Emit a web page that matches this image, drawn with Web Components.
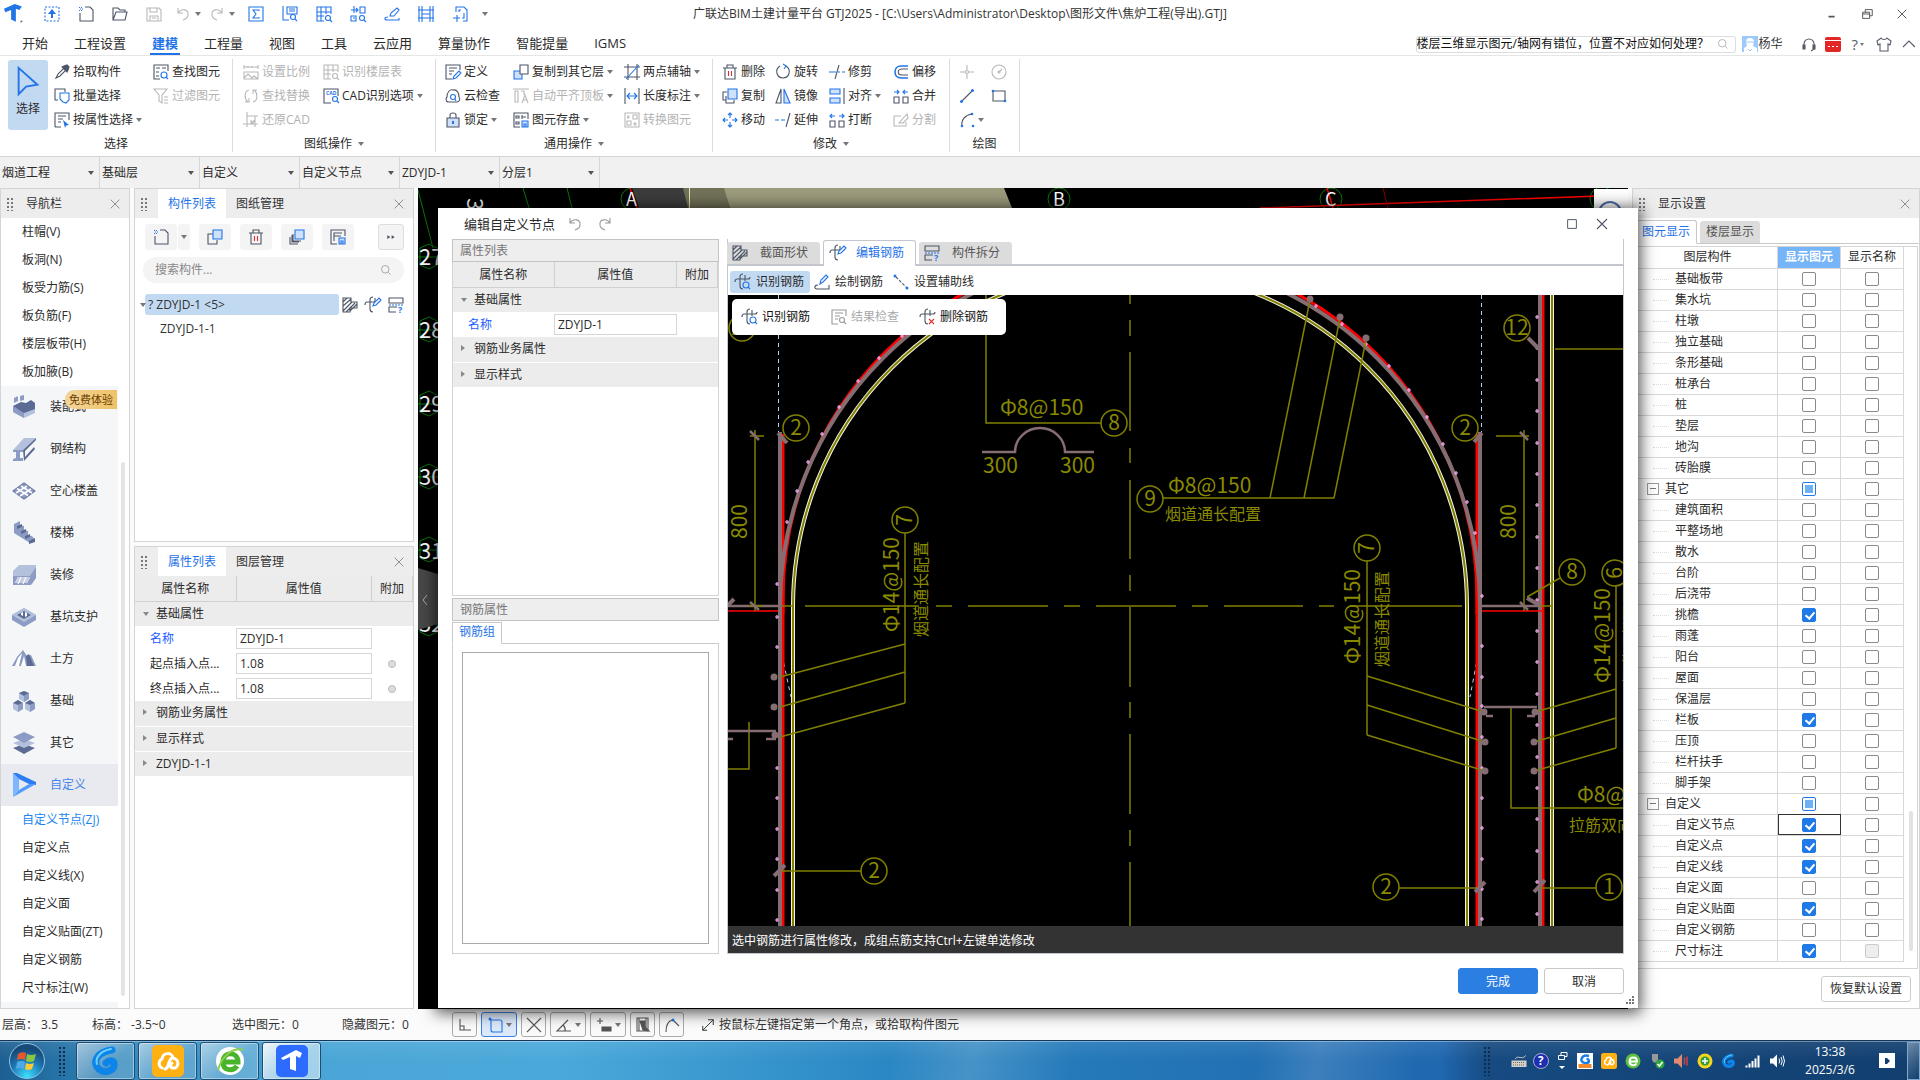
<!DOCTYPE html>
<html lang="zh-CN">
<head>
<meta charset="utf-8">
<title>广联达BIM土建计量平台 GTJ2025</title>
<style>
html,body{margin:0;height:100%}
body{font:12px/16px "Open Sans","Noto Sans CJK SC",sans-serif;color:#2b2b2b;background:#fbfbfb;overflow:hidden}
</style>
</head>
<body>
<gtj-app></gtj-app>
<script>
const RESET = `*{box-sizing:border-box}button,input,select{font:inherit;color:inherit;margin:0;padding:0;border:0;background:none;border-radius:0;outline:0}button{display:flex;align-items:center;white-space:nowrap}:host{display:block}:host([hidden]){display:none}`;

function define(name, css, html, init) {
  const tpl = document.createElement('template');
  customElements.define(name, class extends HTMLElement {
    constructor() { super(); this.attachShadow({ mode: 'open' }); }
    connectedCallback() {
      if (this.shadowRoot.childNodes.length) return;
      tpl.innerHTML = `<style>${RESET}${css}</style>` + (typeof html === 'function' ? html(this) : html);
      this.shadowRoot.append(tpl.content.cloneNode(true));
      if (init) init(this.shadowRoot, this);
    }
  });
}

/* ---------- icons ---------- */
const rebar = '<path d="M0 8Q0 5 2 5H13Q15 5 15 3M8 0Q5 0 5 3V12Q5 15 8 15M10 1V7"/>';
const ICONS = {
  logo: '<g stroke="none" fill="#2273e6"><path d="M0 4 9 0l6 2-2 3-3-1v11l-4-2V5L1 7z"/><path d="M14 14h2l-2 2z" fill="#555"/></g>',
  upload: '<path class="a" stroke-dasharray="2 1.5" d="M1 1h14v14H1z"/><path class="af" d="M8 3l4 5h-3v4H7V8H4z"/>',
  newfile: '<path d="M7 1h5l3 3v11H2V7"/><path class="a" stroke-dasharray="1 1" d="M1 1.5h4M2 3h4M1 4.5h4"/>',
  open: '<path d="M1 14V2h5l2 2h5v2M1 14l3-8h11l-2 8z"/>',
  save: '<path d="M1 2h12l2 2v11H1zM4 2v4h7V2M4 15v-5h8v5M6 12h4"/>',
  undo: '<path d="M3 2v5h5M3 7C6 2 14 3 13 9c0 3-2 4-5 5"/>',
  redo: '<path d="M13 2v5H8M13 7C10 2 2 3 3 9c0 3 2 4 5 5"/>',
  sigma: '<path class="a" d="M1 1h14v14H1zM11 5V4H5l3 4-3 4h6v-1"/>',
  gridfind: '<path class="a" d="M1 0v14h6M5 1h10v7H5zM7 3h6M7 5h6"/><circle class="a" cx="11" cy="11" r="2.5"/><path class="a" d="M13 13l2 2"/>',
  tablefind: '<path class="a" d="M8 15H1V1h14v7M1 6h14M1 10h7M5 1v14M10 1v7"/><circle class="a" cx="12" cy="12" r="2.5"/><path class="a" d="M14 14l2 2"/>',
  move4: '<path class="a" d="M4 0v7M1 4h7M6 2l2 2-2 2M10 1h5v6h-5zM1 10h5v5H1zM3 12h2"/><circle class="a" cx="12" cy="12" r="2.5"/><path class="a" d="M14 14l2 2"/>',
  pen: '<path class="a" d="M6 10l1-3 6-5 2 2-5 6zM4 11c-4 0-4 3-1 3h12v-2"/>',
  frame: '<path class="a" d="M1 0v16M15 0v16M4 0v16M12 0v16M0 4h16M0 12h16M4 8h8"/>',
  crop: '<path class="a" d="M4 6V1h8l3 3v11h-4M1 12h7M5 9v7M7 6V4h2M12 7v5h-2"/>',
  eyedrop: '<path d="M2 14l2-4 6-6 2 2-6 6z"/><path fill="currentColor" d="M8 3l2-1 3-1 2 2-1 3-1 2z"/>',
  batch: '<path d="M4 12H1V1h10v3"/><path class="a" d="M6 5h9v7l-3 3-3-1-3-3z"/>',
  attr: '<path d="M1 15V1h14v7M4 4h8M4 7h5M4 10h3M1 15h6"/><path class="af" d="M9 8l6 5-3 .5-1 2.5z"/>',
  find: '<path d="M15 7V1H1v14h6M3 4h4M3 8h3M3 12h3M9 4h4"/><circle class="a" cx="11" cy="11" r="3"/><path class="a" d="M13 13l2 2"/>',
  filter: '<path d="M1 1h13L9 7v8l-3-2V7zM11 9h4M11 12h4M11 15h4"/>',
  scale: '<path d="M1 3h14M1 1v4M5 2v2M9 2v2M15 1v4M1 8h14v7H1zM1 14l4-4 4 4 2-2 4 3"/>',
  swap: '<path d="M6 2C1 3 1 11 5 14M2 14h4v-4M10 14c5-1 5-9 1-12M14 2h-4v4"/>',
  restore: '<path d="M4 0v15M0 12h15M4 4h11M12 4v11M12 8l-4 3m0-3v3h3"/>',
  cad: '<path d="M8 15H1V1h14v7"/><text x="3" y="7" font-size="5" class="t">CAD</text><circle class="a" cx="12" cy="11" r="2.5"/><path class="a" d="M14 13l2 2"/>',
  define: '<path d="M15 6V1H1v14h6M4 4h8M4 7h5M4 10h3"/><path class="a" d="M8 15l1-3 5-5 2 2-5 5z"/>',
  cloud: '<path d="M3 14a3 3 0 0 1-1-5C2 4 5 1 8 2c4-1 6 3 6 7a3 3 0 0 1-2 5z"/><circle class="a" cx="8" cy="9" r="2.5"/><path class="a" d="M10 11l1 2"/>',
  lock: '<path class="lf" d="M2 6h12v9H2z"/><path d="M5 6V3q0-2 3-2t3 2v3"/><path class="a" stroke-width="2" d="M8 9v3"/>',
  copyto: '<path class="lf a" d="M1 7h8v8H1z"/><path d="M7 1h8v9H7z" fill="#fff"/>',
  align: '<path d="M0 1h16M2 3h3v11H2zM8 3h3v4M9 15l3-8 3 8M10 12h4"/>',
  twopt: '<path d="M4 0v16M13 0v16M0 3h16M0 13h16"/><path class="a" d="M2 15L15 1"/>',
  dim: '<path d="M1 0v16M15 0v16"/><path class="a" d="M3 8h10M6 5L3 8l3 3M10 5l3 3-3 3"/>',
  convert: '<path d="M1 1h14v14H1zM4 3v4M3 5h3M9 3h4v4H9zM3 9h4v4H3zM9 12h4M11 10v4"/>',
  trash: '<path d="M1 4h14M5 4V1h6v3M3 4v11h10V4"/><path stroke="#e03131" d="M6.5 7v5M9.5 7v5"/>',
  rotate: '<path d="M5 2C-1 6 2 14 8 14s9-8 3-12"/><path class="a" d="M8 0l3 2-2 3"/>',
  trim: '<path d="M10 1L6 15"/><path class="a" d="M0 8h7M9 8h2M13 8h3"/>',
  offset: '<path class="a" d="M15 2H8C0 2 0 14 8 14h7" stroke-width="1.6"/><path d="M15 5H9C4 5 4 11 9 11h6"/>',
  copy: '<path d="M4 12H1V4h4"/><path class="lf a" d="M6 1h9v10H6z"/><path d="M4 8v7h8v-3"/>',
  mirror: '<path d="M6 1L1 15h5z"/><path class="lf a" d="M9 1l6 14H9z"/>',
  alignr: '<path class="lf a" d="M1 1h10v5H1zM1 10h10v5H1z"/><path d="M15 0v16"/>',
  merge: '<path d="M1 9h5v6H1zM10 9h5v6h-5z"/><path class="a" d="M1 4h5M4 2l2 2-2 2M15 4h-5M12 2l-2 2 2 2"/>',
  brk: '<path d="M1 9h5v6H1zM10 9h5v6h-5z"/><path class="a" d="M6 4H1M3 2L1 4l2 2M10 4h5M13 2l2 2-2 2"/>',
  move: '<path class="a" d="M8 1v5M8 10v5M1 8h5M10 8h5M6 3l2-2 2 2M6 13l2 2 2-2M3 6L1 8l2 2M13 6l2 2-2 2"/>',
  extend: '<path d="M15 1l-4 14"/><path class="a" d="M0 8h4M6 8h4"/>',
  split: '<path d="M8 4H1v10h12v-4M6 11l8-9 1 4-5 5z"/>',
  point: '<path d="M8 1v5M8 10v5M1 8h5M10 8h5"/><circle cx="8" cy="8" r="1.5"/>',
  circle: '<circle cx="8" cy="8" r="7"/><path d="M8 8l3-3"/><circle cx="8" cy="8" r="1"/>',
  line: '<path d="M3 13L13 3"/><circle class="af" cx="2.5" cy="13.5" r="1.5"/><circle class="af" cx="13.5" cy="2.5" r="1.5"/>',
  rect: '<path d="M2 3h12v10H2z"/><circle class="af" cx="2" cy="3" r="1.3"/><circle class="af" cx="14" cy="13" r="1.3"/>',
  arc: '<path d="M3 14C2 8 6 3 13 2"/><circle class="af" cx="3" cy="14" r="1.3"/><circle class="af" cx="13" cy="2" r="1.3"/><circle class="af" cx="14" cy="14" r="1.3"/>',
  cursor: '<path class="a" stroke-width="1" d="M3 1l10 9-6 1-4 4z"/>',
  search: '<circle cx="7" cy="7" r="5"/><path d="M11 11l3 3"/>',
  close: '<path d="M3 3l10 10M13 3L3 13"/>',
  min: '<path stroke-width="2" d="M4 11h7"/>',
  rest: '<path d="M3 6h8v7H3zM6 6V3h8v7h-3M3 8h8"/>',
  max: '<path d="M3 3h10v10H3z"/>',
  head: '<path d="M3 10V8a5 5 0 0 1 10 0v5l-3 2"/><path fill="currentColor" d="M2 9h2v4H2zM12 9h2v4h-2z"/>',
  shirt: '<path d="M5 2C6 4 10 4 11 2l4 3-1 4-2-1v7H4V8L2 9 1 5z"/>',
  up: '<path d="M2 11l6-6 6 6"/>',
  duplicate: '<path d="M4 5v7h8M1 8v7h8M3 6v7h7"/><path class="lf a" d="M6 1h9v9H6z"/>',
  copy2: '<path d="M6 5H1v10h9v-4"/><path class="lf a" d="M6 1h9v9H6z"/>',
  store: '<path d="M7 15H1V1h14v6M4 12V4h8M4 7h7"/><path class="lf a" d="M9 9h6v6H9zM11 15v-3h2v3"/>',
  elemstore: '<path d="M7 15H1V1h14v6M3 4h3v2H3zM3 10h3v2H3zM9 3v4M9 5h4"/><path class="lf a" d="M9 9h6v6H9zM11 15v-3h2v3"/>',
  ff: '<path fill="currentColor" stroke="none" d="M2 5l5 3-5 3zM9 5l5 3-5 3z"/>',
  section: '<path d="M1 1h8v4h6v6H8v4H1zM1 5l4-4M1 9l8-7M1 14l9-9M4 15l9-9M8 14l7-7"/>',
  editbar: rebar + '<path class="a" fill="#fff" d="M8 9l1-3 5-5 2 2-5 5z"/>',
  split2: '<path d="M1 1h14v5H1zM8 15H1v-5h8"/><path class="a" stroke-dasharray="2 1" d="M1 8h14"/><text class="t" x="10" y="16" font-size="9">?</text>',
  barfind: rebar + '<circle class="a" cx="11" cy="11" r="3"/><path class="a" d="M13 13l2 2"/>',
  bardel: rebar + '<path stroke="#e03131" d="M9 10l5 5M14 10l-5 5"/>',
  penbar: '<path class="a" d="M6 10l1-4 5-5 2 2-5 5z"/><path d="M4 11c-4 0-4 4-1 4h12v-4"/>',
  aux: '<path stroke-dasharray="3 1.5" d="M3 3l10 10"/><circle class="af" cx="2" cy="2" r="1.5"/><circle class="af" cx="14" cy="14" r="1.5"/>',
  check: '<path d="M15 7V1H1v14h6M4 4h8M4 7h5M4 10h3"/><circle cx="11" cy="11" r="2.5"/><path d="M13 13l2 2"/>',
  ortho: '<path d="M3 2v11h11M3 9h4v4"/>',
  snap: '<path class="a" d="M4 3h9q2 0 2 2v10H6q-2 0-2-2z"/><circle class="af" cx="3" cy="2" r="1.5"/>',
  cross: '<path d="M1 1l14 14M15 1L1 15"/>',
  angle: '<path d="M15 14H1L12 3M7 8q3 3 2 6"/>',
  plusbox: '<path d="M4 1v6M1 4h6"/><path fill="currentColor" d="M6 10h9v4H6z"/>',
  film: '<path d="M2 1h11v13H2zM4 1v13M11 1v13"/><path fill="currentColor" d="M5 4h5v6l4 4-6-1z"/>',
  arcpt: '<path d="M2 15Q2 5 8 3M10 4l5 5"/><circle class="af" cx="9" cy="3" r="1.5"/>',
  resize: '<path d="M2 14L14 2M8 2h6v6M2 9v5h5"/>',
  /* navigation */
  n0: '<g stroke="none"><path fill="#8d9cc4" d="M2 3l4-2v5L2 8zM8 1l4-1v5L8 6z"/><path fill="#b4c1dd" d="M1 11v6l11 6 11-5v-5z"/><path fill="#8d9cc4" d="M1 11v6l11 6v-6z"/><path fill="#5b6b93" d="M1 11l8-4 5 1 5-3 4 3v6l-11 4z"/></g>',
  n1: '<g stroke="none"><path fill="#b4c1dd" d="M1 13L12 1h12L11 13z"/><path fill="#5b6b93" d="M11 13L24 1v2L13 14v6l9-10 1 2-11 12z"/><path fill="#8d9cc4" d="M1 13h10v2H8v6h3v3H1v-2l3-1v-6H1z"/></g>',
  n2: '<path fill="#8d9cc4" stroke="#6b7aa4" d="M1 12L12 4l11 8-11 8z"/><path stroke="#fff" stroke-width="1.5" d="M5 9.5l11 7M9 7l11 7M4 14l11-7M8 17l11-7"/>',
  n3: '<g stroke="none"><path fill="#8d9cc4" d="M2 3l6-3v4l4 1v4l4 1v4l4 1 3 4-5 3L2 12z"/><path fill="#5b6b93" d="M5 5l5-2v3l-5 2zM9 10l5-2v3l-5 2zM13 15l5-2v3l-5 2zM17 20l6-3v4l-6 2z"/></g>',
  n4: '<g stroke="none"><path fill="#b4c1dd" d="M7 2h17v12l-4 7H1V8z"/><path fill="#8d9cc4" d="M1 13h17l6-9v11l-5 7H1z"/></g><path stroke="#fff" d="M5 15h13M4 17h13M3 19h13M9 14l-3 7M14 14l-3 7"/>',
  n5: '<g stroke="none"><path fill="#8d9cc4" d="M0 10l12-7 12 7v5l-12 7-12-7z"/><path fill="#b4c1dd" d="M0 10l12-7 12 7-12 7z"/><path fill="#5b6b93" d="M5 10l7-4 7 4-7 4z"/><path fill="#fff" d="M9 8l2-1v4l-2-1zM13 7l2 1v3l-2 1z"/></g>',
  n6: '<g stroke="none"><path fill="#8d9cc4" d="M0 19l5-9 6-7 4 6 4-1 5 11z"/><path fill="#fff" d="M3 19l3-8 4-5-3 13zM9 19l3-10 2 10z"/><path fill="#5b6b93" d="M14 9l3-2 5 12h-7z"/></g>',
  n7: '<g stroke="none"><path fill="#b4c1dd" d="M7 4l5-2 5 2v6l-5 3-5-3zM1 14l5-3 5 3v6l-5 3-5-3zM13 14l5-3 5 3v6l-5 3-5-3z"/><path fill="#5b6b93" d="M7 4l5-2 5 2-5 3zM1 14l5-3 5 3-5 2zM13 14l5-3 5 3-5 2z"/><path fill="#8d9cc4" d="M12 7l5-3v6l-5 3zM6 16l5-2v6l-5 3zM18 16l5-2v6l-5 3z"/></g>',
  n8: '<g stroke="none"><path fill="#5b6b93" d="M1 17l11-4 11 4-11 6z"/><path fill="#b4c1dd" d="M1 12l11-4 11 4-11 5z"/><path fill="#8d9cc4" d="M1 6l11-5 11 5-11 6z"/></g>',
  n9: '<g stroke="none"><path fill="#7db7ff" d="M1 0l6 6v11l-6 7z"/><path fill="#2f7bf2" d="M1 0h4l19 9v3l-7-1L7 6z"/><path fill="#519bff" d="M24 11L1 24l6-7 10-6z"/></g>',
};
define('ui-icon', `
:host{display:inline-block;flex:none;width:var(--s,16px);height:var(--s,16px)}
svg{display:block;width:100%;height:100%;fill:none;stroke:currentColor;stroke-width:1.1;overflow:visible}
.a{stroke:var(--ac,#2374e8)}.af{fill:var(--ac,#2374e8);stroke:none}.lf{fill:var(--lt,#cfe0fa)}
.t{fill:var(--ac,#2374e8);stroke:none;font-weight:700}`,
  el => { const n = el.getAttribute('name'); const b = /^n\d$/.test(n) ? 24 : 16; return `<svg viewBox="0 0 ${b} ${b}" aria-hidden="true">${ICONS[n] || ''}</svg>`; });

define('ui-caret', `:host{display:inline-block;flex:none;border:3px solid transparent;border-top:4px solid #777;border-bottom:0}`, '');

/* ---------- buttons ---------- */
define('tool-button', `
:host{color:#2b2b2b}
button{height:24px;gap:3px}
ui-icon{color:#4d5566}
:host([off]) button{color:#b3b3b3}
:host([off]) ui-icon{color:#b8b8b8;--ac:#b8b8b8;--lt:#fff}`,
  el => `<button type="button" ${el.hasAttribute('off') ? 'disabled' : ''} aria-label="${el.textContent || el.getAttribute('icon')}"><ui-icon name="${el.getAttribute('icon')}"></ui-icon><slot></slot>${el.hasAttribute('menu') ? '<ui-caret></ui-caret>' : ''}</button>`);

define('ribbon-group', `
:host{display:flex;flex-direction:column;border-right:1px solid #dcdcdc;margin:3px 0 4px;padding-top:1px}
.body{display:grid;grid-template-rows:repeat(3,24px);grid-auto-flow:column;grid-template-columns:var(--cols);padding:0 var(--pr,8px) 0 var(--pl,9px)}
.cap{display:flex;justify-content:center;align-items:center;gap:6px;height:22px;padding-top:3px}`,
  el => `<div class="body"><slot></slot></div><div class="cap">${el.getAttribute('caption')}${el.hasAttribute('menu') ? '<ui-caret></ui-caret>' : ''}</div>`);

/* ---------- title bar ---------- */
define('title-bar', `
header{display:grid;grid-template-columns:1fr auto 1fr;height:27px;align-items:center;background:#fff;color:#333}
.qa{display:flex;align-items:center;color:#4d5566}
.qa button{width:34px;height:26px;justify-content:center;gap:4px}
.logo{margin:0 12px 0 4px;--s:19px}
.off{color:#b8b8b8}.last{width:16px!important}
.win{display:flex;justify-content:flex-end;padding-right:1px;color:#555}
.win button{width:35px;height:22px;justify-content:center;--s:14px}`, () => {
  const b = (n, c = '', m = '') => `<button class="${c}" aria-label="${n}"><ui-icon name="${n}"></ui-icon>${m ? '<ui-caret></ui-caret>' : ''}</button>`;
  return `<header><div class="qa"><ui-icon class="logo" name="logo"></ui-icon>${b('upload')}${b('newfile')}${b('open')}${b('save', 'off')}${b('undo', 'off', 1)}${b('redo', 'off', 1)}${['sigma', 'gridfind', 'tablefind', 'move4', 'pen', 'frame', 'crop'].map(n => b(n)).join('')}<button class="last" aria-label="更多"><ui-caret></ui-caret></button></div>
<div>广联达BIM土建计量平台 GTJ2025 - [C:\\Users\\Administrator\\Desktop\\图形文件\\焦炉工程(导出).GTJ]</div>
<div class="win">${b('min')}${b('rest')}${b('close')}</div></header>`;
});

define('menu-bar', `
nav{display:flex;height:29px;background:#fff;border-bottom:1px solid #e6e6e6;padding:0 3px 0 9px;font-size:13px}
nav>button{padding:4px 13px 0;height:28px;position:relative}
.on{color:#1f73e8;font-weight:700}
.on::after{content:"";position:absolute;left:11px;right:11px;bottom:0;height:2px;background:#1f73e8}
.r{margin-left:auto;display:flex;align-items:center;font-size:12px;color:#555b68;padding-top:6px}
.s{display:flex;align-items:center;width:320px;height:17px;border:1px solid #ddd;border-radius:3px;overflow:hidden;margin-right:6px}
.s input{width:300px;flex:none;height:15px;color:#111;font-size:12px}
.s ui-icon{--s:12px;color:#aaa}
.av{width:16px;height:16px;display:block}
.n{margin:0 18px 0 1px;color:#333}
.q{font-size:15px;gap:2px;margin:0 12px 0 11px}
.q ui-caret{border-width:3px 2px 0}
.g{background:#e32626;width:16px;height:15px;border-radius:2px;justify-content:center;margin-left:8px}
.g svg{display:block}
.sh{margin-right:9px}`, () => `<nav>${'开始,工程设置,建模,工程量,视图,工具,云应用,算量协作,智能提量,IGMS'.split(',').map(t => `<button class="${t == '建模' ? 'on' : ''}">${t}</button>`).join('')}
<div class="r"><label class="s"><input aria-label="搜索" value="楼层三维显示图元/轴网有错位，位置不对应如何处理？"><ui-icon name="search"></ui-icon></label>
<svg class="av" viewBox="0 0 16 16" aria-hidden="true"><path fill="#9ccafa" d="M0 0h16v16H0z"/><path fill="#fff" d="M4 6a4 4 0 0 1 8 0l-1 4 4 2v4H2v-4l3-2z"/><path stroke="#9ccafa" d="M3 6h10M6 13l2 2 2-2" fill="none"/></svg><span class="n">杨华</span>
<button aria-label="客服"><ui-icon name="head"></ui-icon></button>
<button class="g" aria-label="消息"><svg width="16" height="15" aria-hidden="true"><path stroke="#fff" d="M0 3.5h16M3 9.5h2M7 9.5h2M11 9.5h2"/></svg></button>
<button class="q" aria-label="帮助">?<ui-caret></ui-caret></button>
<button class="sh" aria-label="皮肤"><ui-icon name="shirt"></ui-icon></button><button aria-label="收起"><ui-icon name="up"></ui-icon></button></div></nav>`);

define('app-ribbon', `
:host{display:flex;height:100px;background:#fff}
.big{grid-row:1/4;width:40px;height:70px;flex-direction:column;justify-content:flex-end;background:#c2d9f2;border-radius:3px;gap:5px;padding-bottom:13px;--s:30px}`, `
<ribbon-group caption="选择" style="--cols:46px 99px 71px;--pl:8px;--pr:8px">
<button class="big"><ui-icon name="cursor"></ui-icon>选择</button>
<tool-button icon="eyedrop">拾取构件</tool-button><tool-button icon="batch">批量选择</tool-button><tool-button icon="attr" menu>按属性选择</tool-button>
<tool-button icon="find">查找图元</tool-button><tool-button icon="filter" off>过滤图元</tool-button></ribbon-group>
<ribbon-group caption="图纸操作" menu style="--cols:80px 105px;--pl:10px;--pr:7px">
<tool-button icon="scale" off>设置比例</tool-button><tool-button icon="swap" off>查找替换</tool-button><tool-button icon="restore" off>还原CAD</tool-button>
<tool-button icon="tablefind" off>识别楼层表</tool-button><tool-button icon="cad" menu>CAD识别选项</tool-button></ribbon-group>
<ribbon-group caption="通用操作" menu style="--cols:68px 111px 80px">
<tool-button icon="define">定义</tool-button><tool-button icon="cloud">云检查</tool-button><tool-button icon="lock" menu>锁定</tool-button>
<tool-button icon="copyto" menu>复制到其它层</tool-button><tool-button icon="align" off menu>自动平齐顶板</tool-button><tool-button icon="elemstore" menu>图元存盘</tool-button>
<tool-button icon="twopt" menu>两点辅轴</tool-button><tool-button icon="dim" menu>长度标注</tool-button><tool-button icon="convert" off>转换图元</tool-button></ribbon-group>
<ribbon-group caption="修改" menu style="--cols:53px 54px 64px 48px">
<tool-button icon="trash">删除</tool-button><tool-button icon="copy">复制</tool-button><tool-button icon="move">移动</tool-button>
<tool-button icon="rotate">旋转</tool-button><tool-button icon="mirror">镜像</tool-button><tool-button icon="extend">延伸</tool-button>
<tool-button icon="trim">修剪</tool-button><tool-button icon="alignr" menu>对齐</tool-button><tool-button icon="brk">打断</tool-button>
<tool-button icon="offset">偏移</tool-button><tool-button icon="merge">合并</tool-button><tool-button icon="split" off>分割</tool-button></ribbon-group>
<ribbon-group caption="绘图" style="--cols:32px 20px">
<tool-button icon="point" off></tool-button><tool-button icon="line"></tool-button><tool-button icon="arc" menu></tool-button>
<tool-button icon="circle" off></tool-button><tool-button icon="rect"></tool-button></ribbon-group>`);

define('combo-box', `
:host{width:100px;border-right:1px solid #d6d6d6}
div{display:flex;align-items:center;height:31px;padding-right:5px}
select{appearance:none;flex:1;min-width:0;height:30px;padding-left:2px}
ui-caret{border-width:4px 3px 0;border-top-color:#555}`,
  el => `<div><select aria-label="${el.getAttribute('label')}"><option>${el.textContent}</option></select><ui-caret></ui-caret></div>`);

/* ---------- dock panel ---------- */
define('dock-panel', `
:host{display:flex;flex-direction:column;background:#fff;border:1px solid #d4d4d4;min-height:0}
header{display:flex;height:29px;flex:none;background:#ededee;align-items:stretch;color:#333}
.h{flex:none;width:8px;margin:8px 10px 7px 5px;background:radial-gradient(circle,#777 1px,transparent 1px) 0 0/4px 4px}
header button{padding:0 10px}
.on{background:#fff;color:#1f73e8}
.ti{padding:7px 0 0 2px}
header .x{margin-left:auto;padding:0 7px;color:#8a8a8a;--s:14px}`,
  el => `<header><i class="h"></i>${el.hasAttribute('caption') ? `<span class="ti">${el.getAttribute('caption')}</span>` : (el.getAttribute('tabs') || '').split(',').map((t, i) => `<button class="${i ? '' : 'on'}">${t}</button>`).join('')}<button class="x" aria-label="关闭"><ui-icon name="close"></ui-icon></button></header><slot></slot>`);

/* ---------- navigation ---------- */
define('nav-list', `
:host{display:flex;flex:1;min-height:0;overflow:hidden}
.l{width:117px;background:#f5f6f8;height:100%}
.sub{background:#fff;display:block}
.sub button{height:28px;padding-left:21px;width:100%}
.cat button{height:42px;width:100%;padding-left:11px;gap:14px;--s:24px;position:relative}
.cat .on{background:#e8eaef;color:#4a86e8}
.cur{color:#1a86f0}
.bd{position:absolute;left:64px;right:1px;top:4px;height:19px;background:linear-gradient(90deg,#f3d49a,#efc267);border-radius:9px 0 0 9px;color:#6b3d00;line-height:19px;font-size:11px;text-align:center}
.sb{width:4px;border-radius:2px;background:#e4e4e6;margin:244px 0 12px 3px}`, () => {
  const s = (a, c) => `<div class="sub">${a.split(',').map((t, i) => `<button class="${c && !i ? 'cur' : ''}">${t}</button>`).join('')}</div>`;
  const cats = '装配式,钢结构,空心楼盖,楼梯,装修,基坑支护,土方,基础,其它,自定义'.split(',');
  return `<div class="l">${s('柱帽(V),板洞(N),板受力筋(S),板负筋(F),楼层板带(H),板加腋(B)')}<div class="cat">${cats.map((t, i) => `<button class="${i == 9 ? 'on' : ''}"><ui-icon name="n${i}"></ui-icon><span>${t}</span>${i ? '' : '<span class="bd">免费体验</span>'}</button>`).join('')}</div>${s('自定义节点(ZJ),自定义点,自定义线(X),自定义面,自定义贴面(ZT),自定义钢筋,尺寸标注(W)', 1)}</div><i class="sb"></i>`;
});

/* ---------- component list ---------- */
define('component-list', `
:host{padding:6px 9px 6px 8px;color:#333}
.tb{display:flex;gap:9px;padding:0 0 0 2px}
.tb button{width:32px;height:26px;background:#f4f4f5;border-radius:3px;justify-content:center;color:#4d5566}
.tb .sp{display:flex;gap:1px}.tb .d{width:12px}
.tb .ff{margin-left:auto;width:26px;border:1px solid #ddd;--s:10px}
.s{display:flex;align-items:center;height:26px;margin-top:7px;border-radius:13px;background:#f4f4f4;padding:0 12px;color:#999}
.s input{flex:1;min-width:0}.s input::placeholder{color:#888;opacity:1}
.row{display:flex;align-items:center;margin:11px 0 0 -3px;gap:7px}
.row ui-caret{margin-right:-8px;position:relative}
.row .n{flex:1;height:21px;background:#c2d9f2;border-radius:3px;padding:0 3px;margin-right:-4px}
.row ui-icon{color:#4d5566}
.k{padding-left:17px;margin-top:6px}`, `
<div class="tb"><div class="sp"><button aria-label="新建"><ui-icon name="newfile"></ui-icon></button><button class="d" aria-label="新建菜单"><ui-caret></ui-caret></button></div>
<button aria-label="复制"><ui-icon name="copy2"></ui-icon></button><button aria-label="删除"><ui-icon name="trash"></ui-icon></button><button aria-label="层间复制"><ui-icon name="duplicate"></ui-icon></button><button aria-label="存档"><ui-icon name="store"></ui-icon></button><button class="ff" aria-label="更多"><ui-icon name="ff"></ui-icon></button></div>
<label class="s"><input aria-label="搜索构件" placeholder="搜索构件..."><ui-icon name="search" style="--s:12px"></ui-icon></label>
<div class="row"><ui-caret></ui-caret><button class="n">? ZDYJD-1 &lt;5&gt;</button><ui-icon name="section"></ui-icon><ui-icon name="editbar"></ui-icon><ui-icon name="split2"></ui-icon></div>
<div class="k"><button>ZDYJD-1-1</button></div>`);

/* ---------- property grid ---------- */
define('property-grid', `
table{border-collapse:collapse;table-layout:fixed;width:100%}
th,td{padding:0;height:25px;font-weight:400;text-align:left}
thead th{background:#ececec;text-align:center;border-right:1px solid #cfcfcf;border-bottom:1px solid #d0d0d0;padding-top:2px}
.g th{background:#ececec;border-bottom:1px solid #fff;padding-left:8px}
.g i{display:inline-block;border:3px solid transparent;border-left:4px solid #888;border-right:0;margin-right:9px;vertical-align:2px}
.g .o{border:3px solid transparent;border-top:4px solid #888;border-bottom:0;margin-right:7px}
td label{padding-left:15px;display:block;white-space:nowrap}
.k label{color:#1a5cff}
input{width:100%;height:21px;border:1px solid #d6d6d6;padding:0 3px;display:block;background:#fff}
b{display:block;width:8px;height:8px;border-radius:50%;background:#ddd;border:1px solid #bbb;margin:auto}`,
  el => {
    const rows = JSON.parse(el.getAttribute('rows'));
    return `<table><colgroup><col style="width:101px"><col><col style="width:41px"></colgroup><thead><tr><th scope="col">属性名称</th><th scope="col">属性值</th><th scope="col">附加</th></tr></thead><tbody>${rows.map((r, i) => typeof r === 'string'
      ? `<tr class="g"><th colspan="3" scope="rowgroup"><i class="${r == '基础属性' ? 'o' : ''}"></i>${r}</th></tr>`
      : `<tr class="${r[0] == '名称' ? 'k' : ''}"><td><label for="p${i}">${r[0]}</label></td><td><input id="p${i}" value="${r[1]}"></td><td>${r[0] == '名称' ? '' : '<b></b>'}</td></tr>`).join('')}</tbody></table>`;
  });

/* ---------- layer table ---------- */
define('layer-table', `
:host{display:flex;flex-direction:column;flex:1;min-height:0}
.tabs{display:flex;align-items:flex-end;gap:3px;height:26px;border-bottom:1px solid #c8c8c8;padding-left:2px}
.tabs button{height:22px;padding:0 6px;background:#dcdcdc;border-radius:3px 3px 0 0;color:#555}
.tabs .on{height:24px;background:#fff;border:1px solid #c8c8c8;border-bottom-color:#fff;color:#1f73e8;margin-bottom:-1px}
.w{flex:1;display:flex;margin:2px 1px 0 4px;border:1px solid #d4d4d4}
table{flex:1;border-collapse:collapse;table-layout:fixed;align-self:flex-start}
th,td{height:21px;padding:0;border:1px solid #d8d8d8;border-left:0;border-top:0;font-weight:400;text-align:left}
thead th{height:21px;text-align:center}
thead .b{background:#76b5f7;color:#fff;font-weight:700}
td{text-align:center}
tbody th{padding-left:37px;position:relative}
tbody th::before{content:"";position:absolute;left:15px;width:16px;top:10px;border-top:1px dotted #ddd}
tbody .p{padding-left:27px}
.p i{position:absolute;left:9px;top:4px;width:12px;height:12px;border:1px solid #999;background:linear-gradient(#777,#777) center/6px 1px no-repeat #fff}
input{appearance:none;width:14px;height:14px;border:1px solid #8a8a8a;border-radius:2px;background:#fff;display:block;margin:auto}
input:checked{border-color:#1f7ae8;background:#1f7ae8}
input:checked::after{content:"";display:block;width:4px;height:7px;border:solid #fff;border-width:0 2px 2px 0;transform:rotate(40deg);margin:1px 0 0 4px}
input:indeterminate{border-color:#1f7ae8;background:linear-gradient(#6fb0f5,#6fb0f5) center/8px 8px no-repeat #fff}
input:disabled{background:#eee;border-color:#ccc}
.f{outline:1px solid #333;outline-offset:-1px}
.sb{width:13px}.sb i{display:block;width:4px;margin:564px auto 0;height:140px;border-radius:2px;background:#e2e2e2}
.bt{display:flex;justify-content:flex-end;padding:7px 8px 6px}
.bt button{height:26px;border:1px solid #ccc;border-radius:3px;padding:0 8px;background:#fff}`, () => {
  const names = '基础板带,集水坑,柱墩,独立基础,条形基础,桩承台,桩,垫层,地沟,砖胎膜,-其它,建筑面积,平整场地,散水,台阶,后浇带,+挑檐,雨蓬,阳台,屋面,保温层,+栏板,压顶,栏杆扶手,脚手架,-自定义,+自定义节点,+自定义点,+自定义线,自定义面,+自定义贴面,自定义钢筋,+尺寸标注'.split(',');
  return `<div class="tabs"><button class="on">图元显示</button><button>楼层显示</button></div><div class="w"><table><colgroup><col><col style="width:63px"><col style="width:63px"></colgroup><thead><tr><th scope="col">图层构件</th><th scope="col" class="b">显示图元</th><th scope="col">显示名称</th></tr></thead><tbody>${names.map(n => {
    const par = n[0] == '-', on = n[0] == '+', t = n.replace(/^[-+]/, '');
    return `<tr><th scope="row" class="${par ? 'p' : ''}">${par ? '<i></i>' : ''}${t}</th><td class="${t == '自定义节点' ? 'f' : ''}"><input type="checkbox" aria-label="${t} 显示图元" ${on ? 'checked' : ''} ${par ? 'data-mix' : ''}></td><td><input type="checkbox" aria-label="${t} 显示名称" ${t == '尺寸标注' ? 'disabled' : ''}></td></tr>`;
  }).join('')}</tbody></table><div class="sb"><i></i></div></div><div class="bt"><button>恢复默认设置</button></div>`;
}, root => root.querySelectorAll('[data-mix]').forEach(c => c.indeterminate = true));

/* ---------- background viewport ---------- */
define('model-view', `
:host{flex:1;min-width:0;background:#000;overflow:hidden}
svg{display:block;font:22px "Noto Sans CJK SC",sans-serif}`, () => `<svg width="100%" height="100%" viewBox="418 188 1210 821" preserveAspectRatio="xMinYMin slice">
<g fill="none" stroke="#0a7a0a"><path d="M418 190l15 58M523 188l6 20M567 188l5 20"/>${[257, 330, 404, 477, 550, 624].map(y => `<path d="M418 ${y}h26M420 ${y - 9}l9-4 10 5M420 ${y + 8}l9 4 10-5M420 ${y - 9}v17"/>`).join('')}
<circle cx="632" cy="199" r="11"/><circle cx="1059" cy="199" r="11"/><circle cx="1331" cy="199" r="11"/><circle cx="1602" cy="199" r="12"/></g>
<path fill="#3c3c3c" d="M632 188h52l5 20h-50z"/><path fill="#727259" d="M683 188h42l5 20h-42z"/><path fill="#9c9b7c" d="M724 188h280l8 20H730z"/><path stroke="#e8e6b8" d="M689.5 188v20"/>
<path stroke="#f00" stroke-width="1.5" d="M630 188l7 20M1327 188l6 20M1260 208l340-12"/><path stroke="#800" d="M1383 188l5 20"/>
<g fill="#fff">${[27, 28, 29, 30, 31, 32].map((n, i) => `<text x="419" y="${265 + Math.round(i * 73.4)}">${n}</text>`).join('')}<text x="626" y="206" font-size="18">A</text><text x="1053" y="206" font-size="18">B</text><text x="1325" y="206" font-size="18">C</text><text transform="translate(467 198) rotate(90)">3</text></g>
<path fill="#484848" d="M418 568l20 6v50l-20 6z"/><path d="M427 595l-4 5 4 5" fill="none" stroke="#aaa"/>
<path fill="#fff" d="M1594 189h34v60h-34z"/><circle cx="1610" cy="213" r="11" fill="none" stroke="#4d6ea8" stroke-width="2"/></svg>`);

/* ---------- rebar drawing ---------- */
define('cad-view', `
:host{flex:1;min-height:0;background:#000;overflow:hidden}
svg{display:block;fill:none;font-family:"Noto Sans CJK SC",sans-serif}
.o{stroke:#808000;stroke-width:1.5}.m{stroke:#856d72;stroke-width:4}.m2{stroke:#856d72;stroke-width:2.5}.r{stroke:#f00;stroke-width:3}
text{fill:#8a8a00;font-size:21px}.n{text-anchor:middle}.c{font-size:16px}
.dot{fill:#856d72}.pk{stroke:#ffb0ff;stroke-width:1.2}`, () => {
  const plus = (x, y) => `M${x - 2} ${y}h4M${x} ${y - 2}v4`;
  const bubble = (x, y, t, rot) => `<circle class="o" cx="${x}" cy="${y}" r="13"/><text class="n" transform="translate(${x} ${y}) rotate(${rot ? -90 : 0})" y="7">${t}</text>`;
  const rows = (x, ys) => ys.map(y => plus(x, y)).join('');
  const arcL = [[902, 336], [879, 358], [858, 381], [839, 407], [822, 434], [808, 462], [797, 491], [787, 522]];
  const arcR = [[1316, 306], [1342, 324], [1366, 344], [1389, 366], [1409, 390], [1427, 417], [1443, 444], [1456, 473], [1467, 502], [1475, 533]];
  const wall = Array.from({ length: 20 }, (_, i) => Math.round(317 + i * 31.4));
  const lining = 'M793 926V606A337 337 0 0 1 1467 606V926M1552 295v631';
  return `<svg width="100%" height="100%" viewBox="728 295 895 631" preserveAspectRatio="xMinYMin slice">
<path stroke="#a9d4ff" stroke-dasharray="4 4" d="M778.5 295v137M1481.5 295v137M782 655l9 42M1478 655l-8 42"/>
<path class="r" d="M783 926V598A347 347 0 0 1 1477 598V926"/><path class="r" d="M783 434v180M1477 434v180M1543 295v631"/>
<path class="m" d="M780 606A350 350 0 0 1 1480 606"/><path class="m" d="M780 432v494M1480 432v494M1540 295v631"/>
<path stroke="#f4f4e8" stroke-width="4" d="${lining}"/><path stroke="#808000" stroke-width="2" d="${lining}"/>
<path class="o" d="M1130 295v9m0 16v16m0 16v79m0 17v15m0 17v79m0 16v16m0 16v80m0 15v16m0 16v80m0 16v16m0 16v64"/>
<path class="o" d="M782 606h11M805 606h114M936 606h16m16 0h80m16 0h16m16 0h80m16 0h16m16 0h79m16 0h15m16 0h112M1540 606h12"/>
<path class="m2" d="M728 606h52M1482 606h58"/><path stroke="#f00" stroke-width="1.5" d="M728 611h50M1482 611h60"/>
<path class="pk" d="${arcL.concat(arcR).map(p => plus(...p)).join('')}${rows(1537, wall)}${rows(1482, [596, 646, 677, 706, 737, 768, 798, 828, 859, 889, 919])}${rows(777, [584, 617, 647, 768, 798, 829, 859, 890, 920])}"/>
<path class="o" d="M986 295v128h115M755 430v181M750 436h14M749 606h14M1524 430v181M1496 436h33M1163 498h171M1270 498l40-198M1304 498l36-180M1334 498l32-158M1555 349h68"/>
<path class="o" d="M905 533v170M780 677l125-33M780 707l125-35M780 737l125-34M861 871h-81M749 722v47h-21"/>
<path class="o" d="M1367 561v174M1367 676l117 36M1367 705l118 37M1367 735l118 36M1399 888h78M1540 888h56M1616 586v162M1535 712l81-23M1534 742l82-24M1534 771l82-23M1511 707v101h112M1527 597l33-19"/>
<path class="m2" d="M982 452h33a25 24 0 0 1 50 0h29M728 731h48M766 739h10M728 739h5M1484 707h53M1486 716h7M1527 716h8"/>
<path class="m" d="M774 876l11-11M1475 892l10-10M1534 892l11-12M778 433l9 10M1482 433l-8 9M1528 338l11 11M1527 598l12 7M728 605l6-6"/>
<path class="m2" d="M750 431l9 9M750 602l9 8M1520 432l8 8M1520 602l8 8"/>
<g class="dot">${[[1310, 299], [1340, 317], [1366, 338], [774, 677], [774, 707], [775, 735], [1484, 712], [1485, 742], [1485, 771], [1535, 712], [1534, 742], [1534, 771]].map(p => `<circle cx="${p[0]}" cy="${p[1]}" r="3.5"/>`).join('')}</g>
${bubble(742, 328, 12)}${bubble(796, 428, 2)}${bubble(1114, 423, 8)}${bubble(1150, 499, 9)}${bubble(905, 520, 7, 1)}${bubble(874, 871, 2)}${bubble(1465, 428, 2)}${bubble(1517, 328, 12)}${bubble(1367, 548, 7, 1)}${bubble(1572, 572, 8)}${bubble(1615, 573, 6, 1)}${bubble(1386, 887, 2)}${bubble(1609, 887, 1)}
<text x="1000" y="415">Φ8@150</text><text x="983" y="473">300</text><text x="1060" y="473">300</text>
<text x="1168" y="493">Φ8@150</text><text class="c" x="1165" y="520">烟道通长配置</text>
<text transform="translate(747 539) rotate(-90)">800</text><text transform="translate(1516 539) rotate(-90)">800</text>
<text transform="translate(899 632) rotate(-90)">Φ14@150</text><text class="c" transform="translate(927 637) rotate(-90)">烟道通长配置</text>
<text transform="translate(1360 664) rotate(-90)">Φ14@150</text><text class="c" transform="translate(1388 667) rotate(-90)">烟道通长配置</text>
<text transform="translate(1610 683) rotate(-90)">Φ14@150</text><text class="c" transform="translate(1636 684) rotate(-90)">烟道通长配置</text>
<text x="1577" y="802">Φ8@600</text><text class="c" x="1569" y="831">拉筋双向</text>
</svg>`;
});

/* ---------- edit dialog ---------- */
define('edit-dialog', `
:host{display:flex;flex-direction:column;background:#fff;box-shadow:0 2px 14px 3px rgba(0,0,0,.65)}
header{display:flex;align-items:center;height:31px;padding:0 28px 0 26px;font-size:13px;flex:none}
header .u{margin-left:12px;color:#999}header .u+.u{margin-left:14px}
header .w{margin-left:15px;color:#777}
header .mx{margin-left:auto;--s:14px;color:#777}
.main{flex:1;display:flex;gap:8px;padding:0 14px;min-height:0}
.l{width:267px;display:flex;flex-direction:column}
.sec{height:23px;flex:none;background:#eee;border:1px solid #c4c4c4;color:#777;padding:3px 7px}
.pg{flex:1;border:1px solid #d4d4d4;border-top:0;margin-bottom:2px}
.bar{height:356px;flex:none;display:flex;flex-direction:column}
.tabs{display:flex;height:23px;align-items:flex-end;border-bottom:1px solid #c8c8c8}
.tabs button{height:22px;padding:0 6px 2px;color:#1f73e8;border:1px solid #c8c8c8;border-bottom-color:#fff;background:#fff;margin-bottom:-1px}
.box{flex:1;border:1px solid #d0d0d0;border-top:0;padding:8px 9px 9px}
.box div{height:100%;border:1px solid #aaa}
.r{flex:1;min-width:0;display:flex;flex-direction:column;border:1px solid #c3c6cc;border-top:0}
.rt{display:flex;gap:3px;height:27px;flex:none;align-items:flex-end;border-bottom:2px solid #c3c6cc;margin:0 -1px}
.rt button{height:22px;border-radius:3px 3px 0 0;background:#dcdcdc;padding:0 12px 0 5px;gap:12px;color:#555}
.rt .on{height:26px;background:#fff;border:1px solid #c3c6cc;border-bottom:0;color:#1f73e8;gap:10px;margin-bottom:-2px;padding:0 11px 2px 6px}
.rt{position:relative}
.rt::after{content:"";position:absolute;right:0;top:26px;width:1px;height:30px;background:#c3c6cc}
ui-icon{color:#4d5566}
.ops{display:flex;height:29px;flex:none;align-items:center;padding:2px 2px 0;gap:4px}
.ops button{height:22px;gap:5px;padding:0 6px 0 5px;border-radius:3px}
.ops .on{background:#c2d9f2}
.ops .on~button{padding-left:0}
.cv{flex:1;min-height:0;display:flex;position:relative}
.fl{position:absolute;left:4px;top:4px;width:274px;height:36px;background:#fff;border-radius:5px;display:flex;align-items:center;padding:0 10px;gap:21px;color:#111}
.fl button{gap:4px}.fl .off{color:#aaa}.off ui-icon{color:#999}
.tip{height:27px;background:#333;color:#fff;padding:7px 4px 0;flex:none}
footer{display:flex;justify-content:flex-end;gap:6px;padding:14px 14px;height:54px;flex:none;position:relative}
footer button{width:80px;height:26px;justify-content:center;border:1px solid #c8c8c8;border-radius:3px;background:#fff;padding-top:2px}
footer .ok{background:#2c7fe2;border-color:#2c7fe2;color:#fff}
footer svg{position:absolute;right:4px;bottom:4px}`, `
<header><span>编辑自定义节点</span><button class="u" aria-label="撤销"><ui-icon name="undo" style="color:#999"></ui-icon></button><button class="u" aria-label="恢复"><ui-icon name="redo" style="color:#999"></ui-icon></button><button class="mx" aria-label="最大化"><ui-icon name="max"></ui-icon></button><button class="w" aria-label="关闭"><ui-icon name="close"></ui-icon></button></header>
<div class="main"><div class="l"><div class="sec">属性列表</div><div class="pg"><property-grid rows='["基础属性",["名称","ZDYJD-1"],"钢筋业务属性","显示样式"]'></property-grid></div>
<div class="bar"><div class="sec">钢筋属性</div><div class="tabs"><button>钢筋组</button></div><div class="box"><div></div></div></div></div>
<div class="r"><div class="rt"><button><ui-icon name="section"></ui-icon>截面形状</button><button class="on"><ui-icon name="editbar"></ui-icon>编辑钢筋</button><button><ui-icon name="split2"></ui-icon>构件拆分</button></div>
<div class="ops"><button class="on"><ui-icon name="barfind"></ui-icon>识别钢筋</button><button><ui-icon name="penbar"></ui-icon>绘制钢筋</button><button><ui-icon name="aux"></ui-icon>设置辅助线</button></div>
<div class="cv"><cad-view></cad-view><div class="fl"><button><ui-icon name="barfind"></ui-icon>识别钢筋</button><button class="off" disabled><ui-icon name="check"></ui-icon>结果检查</button><button><ui-icon name="bardel"></ui-icon>删除钢筋</button></div></div>
<div class="tip">选中钢筋进行属性修改，成组点筋支持Ctrl+左键单选修改</div></div></div>
<footer><button class="ok">完成</button><button>取消</button><svg width="8" height="8" aria-hidden="true"><path fill="#777" d="M6 0h2v2H6zM3 3h2v2H3zM6 3h2v2H6zM0 6h2v2H0zM3 6h2v2H3zM6 6h2v2H6z"/></svg></footer>`);

/* ---------- status bar ---------- */
define('status-bar', `
:host{display:flex;align-items:center;height:31px;background:#fbfbfb;color:#333;white-space:nowrap}
span{width:var(--w);padding-left:2px}
.b{display:flex;gap:4px}
.b button{height:25px;width:25px;border:1px solid #aaa;border-radius:3px;justify-content:center;gap:3px;color:#555;background:#fafafa}
.b .w{width:36px}.b .on{background:#dce9fb;border-color:#3b82e8}
.m{display:flex;align-items:center;gap:4px;margin-left:17px;--s:14px}`, `
<span style="--w:90px">层高：&nbsp;3.5</span><span style="--w:140px">标高：&nbsp;-3.5~0</span><span style="--w:110px">选中图元：0</span><span style="--w:112px">隐藏图元：0</span>
<div class="b"><button aria-label="正交"><ui-icon name="ortho"></ui-icon></button><button class="w on" aria-label="捕捉"><ui-icon name="snap"></ui-icon><ui-caret></ui-caret></button><button aria-label="交点"><ui-icon name="cross"></ui-icon></button><button class="w" aria-label="角度"><ui-icon name="angle"></ui-icon><ui-caret></ui-caret></button><button class="w" aria-label="偏移"><ui-icon name="plusbox"></ui-icon><ui-caret></ui-caret></button><button aria-label="图元"><ui-icon name="film"></ui-icon></button><button aria-label="弧"><ui-icon name="arcpt"></ui-icon></button></div>
<div class="m"><ui-icon name="resize"></ui-icon>按鼠标左键指定第一个角点，或拾取构件图元</div>`);

/* ---------- task bar ---------- */
const G = {
  gee: '<path fill="none" stroke="#0d84e8" stroke-width="7" stroke-linecap="round" d="M22 5C8 7 3 15 7 22s19 6 17-4c-1-3-5-3-8 0"/><path fill="none" stroke="#6ad0ff" stroke-width="2" stroke-linecap="round" d="M21 4C10 6 5 13 7 19"/>',
  cloudy: '<rect width="32" height="32" rx="5" fill="#ffb012"/><path fill="none" stroke="#fff" stroke-width="3" stroke-linecap="round" d="M10 23a5 5 0 0 1 0-9c1-7 10-7 11-1 7 1 6 11 0 10-3 0-3-3-1-5M13 24c5-1 2-8 7-11"/>',
  e: '<circle cx="16" cy="16" r="14" fill="#fff"/><path fill="none" stroke="#49b32c" stroke-width="5" d="M8 17h16c0-11-15-11-15 0 0 10 11 9 14 4"/><path fill="none" stroke="#8ad14a" stroke-width="2" d="M4 25C8 10 20 2 29 5"/>',
  tee: '<rect width="32" height="32" rx="5" fill="#2d6bff"/><path fill="#fff" d="M5 13l15-8 6 3-2 5-4-2v15l-6-2V12l-7 3z"/>',
};
define('task-bar', `
:host{display:flex;align-items:center;height:40px;border-top:1px solid #14375c;box-shadow:inset 0 1px rgba(255,255,255,.35);color:#fff;
background:linear-gradient(180deg,rgba(255,255,255,.08),transparent 50%),linear-gradient(100deg,transparent 880px,rgba(255,255,255,.14) 960px,transparent 1060px,transparent 1240px,rgba(255,255,255,.12) 1300px,transparent 1400px),linear-gradient(90deg,#1d5f92 0,#2f86bb 120px,#4aa6d6 330px,#4ba9da 560px,#2b88c4 880px,#2478b8 1100px,#2068b0 1440px,#164a80 1490px,#123f70 1900px)}
.orb{width:36px;height:36px;margin-left:9px;border-radius:50%;background:radial-gradient(circle at 50% 95%,#3ee0ff 0,#1d77b5 45%,#174a78 75%);justify-content:center;border:1px solid #8fc4e2}
.dots{width:8px;height:30px;margin:0 10px 0 13px;background:radial-gradient(circle,#0b2c4a 1px,transparent 1px) 0 0/4px 4px}
.a{width:59px;height:38px;margin-right:3px;border:1px solid #1d4d74;border-radius:3px;background:linear-gradient(135deg,rgba(255,255,255,.55),rgba(255,255,255,.2) 60%);box-shadow:inset 0 0 0 1px rgba(255,255,255,.4);justify-content:center}
.a.on{background:linear-gradient(135deg,rgba(255,255,255,.9),rgba(255,255,255,.5) 60%)}
.tray,.ime{display:flex;align-items:center;gap:8px}
.tray{margin-left:auto}.ime{gap:6px}
.tray svg{display:block}
.tray .dots{margin:0 12px 0 0}
.clk{width:66px;text-align:center;line-height:18px;margin-left:4px}
.nt{width:16px;height:15px;margin-left:8px}
.sd{width:13px;height:38px;border:1px solid #7fa8cc;margin-left:4px;background:linear-gradient(135deg,rgba(255,255,255,.35),transparent)}`, () => {
  const s = (k, n = 32) => `<svg width="${n}" height="${n}" viewBox="0 0 32 32" aria-hidden="true">${G[k] || k}</svg>`;
  return `<button class="orb" aria-label="开始"><svg width="24" height="24" viewBox="0 0 24 24" aria-hidden="true"><path fill="#e8562c" d="M3 5q4-3 8-1l-1 7q-4-2-8 0z"/><path fill="#8cc63e" d="M12 5q4 2 9 0l-2 7q-4 2-8 0z"/><path fill="#4fa9e8" d="M2 13q4-2 8 0l-1 7q-4-2-8 0z"/><path fill="#fcc938" d="M11 14q4 2 8 0l-2 6q-4 2-7 0z"/></svg></button><i class="dots"></i>
<button class="a" aria-label="G">${s('gee')}</button><button class="a" aria-label="云">${s('cloudy')}</button><button class="a" aria-label="浏览器">${s('e')}</button><button class="a on" aria-label="GTJ">${s('tee')}</button>
<div class="tray"><i class="dots"></i><div class="ime">${s('<path fill="#d5d0c8" d="M1 15h30v13H1z"/><path stroke="#666" stroke-width="2" stroke-dasharray="2 2" d="M4 19h24M4 24h24"/><path fill="none" stroke="#bbb" stroke-width="2" d="M8 12q4-6 10-3t12-4"/>', 16)}${s('<circle cx="16" cy="16" r="15" fill="#1c2fb0" stroke="#aac" stroke-width="2"/><text x="10" y="24" fill="#fff" font-size="23" font-weight="700">?</text>', 16)}
<svg width="14" height="24" viewBox="0 0 14 24" aria-hidden="true"><path fill="none" stroke="#fff" d="M3.5 6.5h6v4h-6zM6 6V3.5h6v4h-2"/><path fill="#fff" d="M4 17h6l-3 3z"/></svg></div>
${s('<rect width="32" height="32" fill="#fff"/><path fill="none" stroke="#1a7fe0" stroke-width="5" d="M24 6C8 2 4 18 15 20s11-8 4-8"/><path fill="#f08a2c" d="M3 22h26v8H3z"/>', 16)}${s('cloudy', 16)}${s('<circle cx="16" cy="16" r="15" fill="#5cc043"/><path fill="none" stroke="#fff" stroke-width="4" d="M8 17h16c0-11-15-11-15 0 0 9 11 9 14 4"/>', 16)}
${s('<path fill="#999" d="M6 2h12v12l-3 5H9l-3-5z"/><circle cx="22" cy="22" r="9" fill="#2fa63c"/><path fill="none" stroke="#fff" stroke-width="3" d="M17 22l4 4 6-8"/>', 16)}${s('<path fill="#e08a70" d="M2 11h7l9-9v28l-9-9H2z"/><path fill="none" stroke="#c44" stroke-width="3" d="M23 9v14M28 7v18"/>', 16)}${s('<circle cx="16" cy="16" r="15" fill="#f7d51d"/><circle cx="16" cy="16" r="9" fill="#2f9a3e"/><path stroke="#fff" stroke-width="3" d="M16 10v12M10 16h12"/>', 16)}${s('gee', 16)}
${s('<path fill="#fff" d="M1 25h4v4H1zM7 21h4v8H7zM13 16h4v13h-4zM19 11h4v18h-4zM25 5h4v24h-4z"/>', 16)}${s('<path fill="#fff" d="M2 11h6l8-8v26l-8-8H2z"/><path fill="none" stroke="#fff" stroke-width="2" d="M20 11q3 5 0 10M24 8q5 8 0 16M28 5q6 11 0 22"/>', 16)}
<div class="clk">13:38<br>2025/3/6</div><svg class="nt" viewBox="0 0 16 15" aria-hidden="true"><path fill="#fff" d="M0 0h16v15H0z"/><path fill="#123f70" d="M6 5h2l3 3-3 3H6z"/></svg><button class="sd" aria-label="显示桌面"></button></div>`;
});

/* ---------- application ---------- */
define('gtj-app', `
:host{display:flex;flex-direction:column;height:100vh;position:relative}
.sel{display:flex;height:32px;flex:none;background:#f1f1f1;border-top:1px solid #d4d4d4}
main{flex:1;display:flex;gap:4px;min-height:0}
.nav{width:130px}.mid{width:280px;display:flex;flex-direction:column;gap:4px}
.mid dock-panel:first-child{height:354px}.mid dock-panel:last-child{flex:1}
.disp{width:288px}
edit-dialog{position:absolute;left:438px;top:208px;width:1200px;height:800px}`, `
<title-bar></title-bar><menu-bar></menu-bar><app-ribbon></app-ribbon>
<div class="sel"><combo-box label="工程">烟道工程</combo-box><combo-box label="楼层">基础层</combo-box><combo-box label="类别">自定义</combo-box><combo-box label="类型">自定义节点</combo-box><combo-box label="构件">ZDYJD-1</combo-box><combo-box label="分层">分层1</combo-box></div>
<main><dock-panel class="nav" caption="导航栏"><nav-list></nav-list></dock-panel>
<div class="mid"><dock-panel tabs="构件列表,图纸管理"><component-list></component-list></dock-panel>
<dock-panel tabs="属性列表,图层管理"><property-grid rows='["基础属性",["名称","ZDYJD-1"],["起点插入点...","1.08"],["终点插入点...","1.08"],"钢筋业务属性","显示样式","ZDYJD-1-1"]'></property-grid></dock-panel></div>
<model-view></model-view>
<dock-panel class="disp" caption="显示设置"><layer-table></layer-table></dock-panel></main>
<status-bar></status-bar><task-bar></task-bar>
<edit-dialog role="dialog" aria-label="编辑自定义节点"></edit-dialog>`);
</script>
</body>
</html>
